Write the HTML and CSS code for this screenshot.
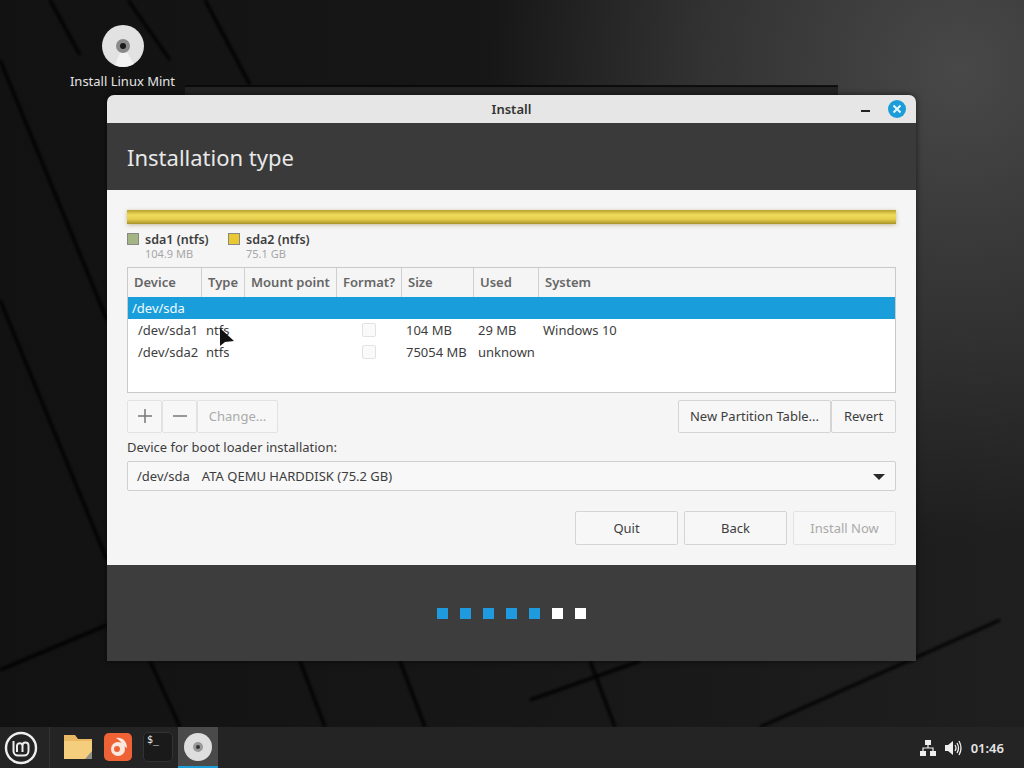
FILE: index.html
```html
<!DOCTYPE html>
<html lang="en">
<head>
    <meta charset="UTF-8">
    <meta name="viewport" content="width=device-width, initial-scale=1.0">
    <title>Install</title>
    <link rel="stylesheet" href="styles.css">
</head>
<body>
    <div class="desktop">
        <!-- wallpaper -->
        <svg class="wallpaper" viewBox="0 0 1024 768" preserveAspectRatio="none">
            <defs>
                <linearGradient id="wall" x1="0" y1="0" x2="1" y2="0">
                    <stop offset="0" stop-color="#121212"/>
                    <stop offset="0.6" stop-color="#181818"/>
                    <stop offset="1" stop-color="#1f1f1f"/>
                </linearGradient>
                <radialGradient id="glow" gradientUnits="userSpaceOnUse" cx="960" cy="70" r="470">
                    <stop offset="0" stop-color="#484848"/>
                    <stop offset="0.55" stop-color="#323232"/>
                    <stop offset="1" stop-color="#323232" stop-opacity="0"/>
                </radialGradient>
                <filter id="soft"><feGaussianBlur stdDeviation="1.500"/></filter>
            </defs>
            <rect width="1024" height="768" fill="url(#wall)"/>
            <rect width="1024" height="768" fill="url(#glow)"/>
            <g stroke="#060606" stroke-width="3" fill="none" filter="url(#soft)">
                <line x1="50" y1="0" x2="80" y2="55"/>
                <line x1="128" y1="0" x2="170" y2="60"/>
                <line x1="205" y1="0" x2="250" y2="85"/>
                <line x1="0" y1="60" x2="107" y2="320"/>
                <line x1="0" y1="300" x2="107" y2="560"/>
                <line x1="0" y1="670" x2="107" y2="625"/>
                <line x1="300" y1="661" x2="325" y2="727"/>
                <line x1="400" y1="661" x2="425" y2="727"/>
                <line x1="590" y1="661" x2="615" y2="727"/>
                <line x1="530" y1="700" x2="640" y2="661"/>
                <line x1="760" y1="727" x2="1000" y2="620"/>
                <line x1="180" y1="727" x2="150" y2="661"/>
            </g>
            <polygon points="185,86 838,86 838,95 185,95" fill="#232323"/>
            <line x1="185" y1="86" x2="838" y2="86" stroke="#050505" stroke-width="1.500"/>
        </svg>

        <div class="desktop-icon">
            <svg class="disc" viewBox="0 0 42 42" width="42" height="42">
                <circle cx="21" cy="21" r="21" fill="#e2e2e2"/>
                <path d="M21 21 L32 39 A21 21 0 0 1 13 40 Z" fill="#f2f2f2"/>
                <circle cx="21" cy="21" r="7" fill="#8a8a8a"/>
                <circle cx="21" cy="21" r="3" fill="#1a1a1a"/>
            </svg>
            <span>Install Linux Mint</span>
        </div>

        <!-- installer window -->
        <div class="window">
            <div class="titlebar">
                <span>Install</span>
                <div class="minimize"></div>
                <div class="close-btn">
                    <svg viewBox="0 0 18 18" width="18" height="18">
                        <path d="M5.500 5.500 L12.500 12.500 M12.500 5.500 L5.500 12.500" stroke="#e8f6fc" stroke-width="2" fill="none"/>
                    </svg>
                </div>
            </div>
            <div class="header"><h1>Installation type</h1></div>
            <div class="content">
                <div class="disk-bar"></div>
                <div class="legend">
                    <div class="legend-item legend-first">
                        <div class="swatch swatch-green"></div>
                        <div>
                            <div class="legend-name">sda1 (ntfs)</div>
                            <div class="legend-size">104.9 MB</div>
                        </div>
                    </div>
                    <div class="legend-item">
                        <div class="swatch swatch-yellow"></div>
                        <div>
                            <div class="legend-name">sda2 (ntfs)</div>
                            <div class="legend-size">75.1 GB</div>
                        </div>
                    </div>
                </div>

                <div class="table">
                    <div class="row table-head">
                        <div class="col col-device">Device</div>
                        <div class="col col-type">Type</div>
                        <div class="col col-mount">Mount point</div>
                        <div class="col col-format">Format?</div>
                        <div class="col col-size">Size</div>
                        <div class="col col-used">Used</div>
                        <div class="col col-system">System</div>
                    </div>
                    <div class="row row-selected"><div class="cell-root">/dev/sda</div></div>
                    <div class="row">
                        <div class="col col-device cell-dev">/dev/sda1</div>
                        <div class="col col-type">ntfs</div>
                        <div class="col col-mount"></div>
                        <div class="col col-format"><div class="check"></div></div>
                        <div class="col col-size">104 MB</div>
                        <div class="col col-used">29 MB</div>
                        <div class="col col-system">Windows 10</div>
                    </div>
                    <div class="row">
                        <div class="col col-device cell-dev">/dev/sda2</div>
                        <div class="col col-type">ntfs</div>
                        <div class="col col-mount"></div>
                        <div class="col col-format"><div class="check"></div></div>
                        <div class="col col-size">75054 MB</div>
                        <div class="col col-used">unknown</div>
                        <div class="col col-system"></div>
                    </div>
                </div>

                <div class="table-tools">
                    <div class="tool-group">
                        <div class="btn btn-icon">
                            <svg viewBox="0 0 16 16" width="16" height="16"><path d="M8 1 V15 M1 8 H15" stroke="#777" stroke-width="1.500" fill="none"/></svg>
                        </div>
                        <div class="btn btn-icon">
                            <svg viewBox="0 0 16 16" width="16" height="16"><path d="M1 8 H15" stroke="#777" stroke-width="1.500" fill="none"/></svg>
                        </div>
                        <div class="btn btn-change">Change...</div>
                    </div>
                    <div class="tool-group">
                        <div class="btn btn-table">New Partition Table...</div>
                        <div class="btn btn-revert">Revert</div>
                    </div>
                </div>

                <div class="boot-label">Device for boot loader installation:</div>
                <div class="combo">
                    <span class="combo-dev">/dev/sda</span>
                    <span>ATA QEMU HARDDISK (75.2 GB)</span>
                    <div class="combo-arrow"></div>
                </div>

                <div class="actions">
                    <div class="btn btn-action">Quit</div>
                    <div class="btn btn-action">Back</div>
                    <div class="btn btn-action btn-disabled">Install Now</div>
                </div>
            </div>
            <div class="footer">
                <div class="dot dot-on"></div>
                <div class="dot dot-on"></div>
                <div class="dot dot-on"></div>
                <div class="dot dot-on"></div>
                <div class="dot dot-on"></div>
                <div class="dot"></div>
                <div class="dot"></div>
            </div>
        </div>

        <!-- mouse pointer -->
        <svg class="pointer" viewBox="0 0 16 22" width="16" height="22">
            <path d="M1 1 L1 19 L6 15 L15 14 Z" fill="#111"/>
        </svg>

        <!-- taskbar -->
        <div class="taskbar">
            <div class="menu-btn">
                <svg viewBox="0 0 34 34" width="34" height="34">
                    <circle cx="17" cy="17" r="15" fill="none" stroke="#eee" stroke-width="2.400"/>
                    <path d="M9.500 10 V20 A4.500 4.500 0 0 0 14 24.500 H20 A4.500 4.500 0 0 0 24.500 20 V14.500 A3 3 0 0 0 18.500 14.500 V21 M18.500 14.500 A2.800 2.800 0 0 0 13 14.500 V21" fill="none" stroke="#eee" stroke-width="2"/>
                </svg>
            </div>
            <div class="launcher">
                <svg viewBox="0 0 30 28" width="30" height="28">
                    <path d="M1 2 H12 L15 6 H29 V26 H1 Z" fill="#e8b962"/>
                    <path d="M1 8 H29 V26 H1 Z" fill="#f4cd7d"/>
                    <path d="M22 26 L29 18 V26 Z" fill="#8f8f85"/>
                </svg>
            </div>
            <div class="launcher">
                <svg viewBox="0 0 28 28" width="28" height="28">
                    <rect width="28" height="28" rx="5" fill="#ef6236"/>
                    <circle cx="14" cy="16" r="7" fill="#fbe9df"/>
                    <circle cx="13" cy="16" r="3" fill="#ef6236"/>
                    <path d="M12 5 C18 4 23 8 23 15 L18 12 C18 9 15 7 12 5 Z" fill="#fbe9df"/>
                </svg>
            </div>
            <div class="launcher">
                <div class="terminal">$_</div>
            </div>
            <div class="launcher launcher-active">
                <svg viewBox="0 0 28 28" width="28" height="28">
                    <circle cx="14" cy="14" r="14" fill="#dedede"/>
                    <circle cx="14" cy="14" r="5" fill="#999"/>
                    <circle cx="14" cy="14" r="2" fill="#333"/>
                </svg>
            </div>
            <div class="tray">
                <svg viewBox="0 0 18 18" width="18" height="18">
                    <path d="M6 1 H12 V6 H6 Z M1 12 H7 V17 H1 Z M11 12 H17 V17 H11 Z" fill="#eee"/>
                    <path d="M9 6 V9 M4 12 V9 H14 V12" fill="none" stroke="#eee" stroke-width="1.200"/>
                </svg>
                <svg viewBox="0 0 18 18" width="18" height="18">
                    <path d="M1 6 H4 L9 2 V16 L4 12 H1 Z" fill="#eee"/>
                    <path d="M11 6 Q13 9 11 12 M13 4 Q16 9 13 14 M15 2 Q19 9 15 16" fill="none" stroke="#eee" stroke-width="1.300"/>
                </svg>
                <span class="clock">01:46</span>
            </div>
        </div>
    </div>
</body>
</html>
```

FILE: styles.css
```css
* {
    box-sizing: border-box;
}

body {
    font-family: "Noto Sans", "Open Sans", sans-serif;
    font-size: 13px;
    margin: 0;
    padding: 0;
    color: #3d3d3d;
}

.desktop {
    position: relative;
    width: 1024px;
    height: 768px;
    overflow: hidden;
    display: flex;
    flex-direction: column;
    justify-content: flex-end;
    background-color: #161616;
}

.wallpaper {
    position: absolute;
    top: 0;
    left: 0;
    width: 100%;
    height: 100%;
}

.desktop-icon {
    position: absolute;
    top: 25px;
    left: 60px;
    width: 125px;
    display: flex;
    flex-direction: column;
    align-items: center;
    gap: 5px;
    color: #e4e4e4;
}

.window {
    position: absolute;
    top: 95px;
    left: 107px;
    width: 809px;
    height: 566px;
    display: flex;
    flex-direction: column;
    border-radius: 7px 7px 0 0;
    overflow: hidden;
    box-shadow: 0 0 6px rgba(0, 0, 0, 0.6);
}

.titlebar {
    position: relative;
    height: 28px;
    flex: none;
    display: flex;
    justify-content: center;
    align-items: center;
    background-color: #e6e6e6;
    font-weight: 600;
    color: #333;
}

.minimize {
    position: absolute;
    top: 15px;
    right: 46px;
    width: 9px;
    height: 2px;
    background-color: #222;
}

.close-btn {
    position: absolute;
    top: 5px;
    right: 10px;
    width: 18px;
    height: 18px;
    border-radius: 50%;
    background-color: #1b9dd9;
}

.close-btn svg {
    display: block;
}

.header {
    height: 67px;
    flex: none;
    display: flex;
    align-items: center;
    padding-left: 20px;
    background-color: #3a3a3a;
}

.header h1 {
    margin: 0;
    font-size: 22px;
    font-weight: 400;
    color: #e8e8e8;
}

.content {
    height: 375px;
    flex: none;
    padding: 20px 20px 0;
    background-color: #f5f5f5;
}

.disk-bar {
    height: 14px;
    background:
        repeating-linear-gradient(90deg, transparent 0, transparent 40px, rgba(110, 95, 20, 0.45) 40px, rgba(110, 95, 20, 0.45) 41px),
        linear-gradient(#b8a02e, #efdb5b 35%, #e6cf4c 65%, #a8922a);
    background-size: 40px 100%, 100% 100%;
    box-shadow: 0 1px 4px rgba(120, 100, 20, 0.4);
}

.legend {
    display: flex;
    gap: 16px;
    margin-top: 9px;
    height: 34px;
}

.legend-item {
    display: flex;
    gap: 6px;
}

.legend-first {
    width: 85px;
}

.swatch {
    width: 12px;
    height: 12px;
    margin-top: 0;
    border: 1px solid #888;
}

.swatch-green {
    background-color: #a3b583;
}

.swatch-yellow {
    background-color: #e9c832;
}

.legend-name {
    font-size: 12.500px;
    font-weight: 600;
    line-height: 13px;
    color: #3d3d3d;
}

.legend-size {
    font-size: 11px;
    line-height: 16px;
    color: #a6a6a6;
}

.table {
    height: 126px;
    background-color: #fff;
    border: 1px solid #c9c9c9;
}

.row {
    display: flex;
    height: 22px;
    line-height: 22px;
}

.table-head {
    height: 29px;
    line-height: 28px;
    background-color: #f5f5f5;
    font-weight: 600;
    color: #666;
}

.table-head .col {
    padding-left: 6px;
    border-right: 1px solid #cfcfcf;
}

.table-head .col-system {
    border-right: none;
}

.row-selected {
    background-color: #1a9edb;
    color: #f2fbff;
}

.cell-root {
    padding-left: 4px;
}

.col {
    flex: none;
    white-space: nowrap;
    padding-left: 4px;
}

.col-device {
    width: 74px;
}

.cell-dev {
    padding-left: 10px;
}

.col-type {
    width: 43px;
}

.col-mount {
    width: 92px;
}

.col-format {
    width: 65px;
}

.col-size {
    width: 72px;
}

.col-used {
    width: 65px;
}

.col-system {
    flex: 1;
}

.check {
    width: 14px;
    height: 14px;
    margin: 4px 0 0 21px;
    border: 1px solid #e2e2e2;
    border-radius: 2px;
    background-color: #fafafa;
}

.table-tools {
    display: flex;
    justify-content: space-between;
    margin-top: 7px;
    line-height: 16px;
}

.tool-group {
    display: flex;
}

.btn {
    height: 33px;
    padding-bottom: 2px;
    display: flex;
    justify-content: center;
    align-items: center;
    background-color: #f7f7f7;
    border: 1px solid #d4d4d4;
    border-radius: 2px;
    color: #3d3d3d;
}

.btn-icon {
    width: 35px;
    border-color: #e2e2e2;
}

.btn-change {
    width: 81px;
    border-color: #e2e2e2;
    color: #aaa;
}

.btn-table {
    width: 153px;
}

.btn-revert {
    width: 65px;
}

.boot-label {
    margin-top: 6px;
    line-height: 16px;
    color: #3d3d3d;
}

.combo {
    position: relative;
    height: 30px;
    margin-top: 6px;
    display: flex;
    align-items: center;
    gap: 12px;
    padding-left: 9px;
    background-color: #f8f8f8;
    border: 1px solid #cfcfcf;
    border-radius: 2px;
}

.combo-arrow {
    position: absolute;
    top: 12px;
    right: 10px;
    width: 0;
    height: 0;
    border-style: solid;
    border-width: 6px 6px 0 6px;
    border-color: #2a2a2a transparent transparent transparent;
}

.actions {
    display: flex;
    justify-content: flex-end;
    gap: 6px;
    margin-top: 20px;
}

.btn-action {
    width: 103px;
    height: 34px;
    padding-bottom: 0;
}

.btn-disabled {
    border-color: #e2e2e2;
    color: #aaa;
}

.footer {
    flex: 1;
    display: flex;
    justify-content: center;
    align-items: center;
    gap: 12px;
    background-color: #3d3d3d;
}

.dot {
    width: 11px;
    height: 11px;
    background-color: #fff;
}

.dot-on {
    background-color: #1f9ade;
}

.pointer {
    position: absolute;
    top: 327px;
    left: 219px;
}

.taskbar {
    position: relative;
    height: 41px;
    flex: none;
    display: flex;
    align-items: center;
    background-color: #242424;
}

.menu-btn {
    width: 50px;
    height: 100%;
    padding-left: 4px;
    display: flex;
    align-items: center;
    border-right: 1px solid #333;
}

.launcher {
    width: 40px;
    height: 100%;
    display: flex;
    justify-content: center;
    align-items: center;
    border-bottom: 2px solid transparent;
}

.launcher:nth-child(2) {
    margin-left: 8px;
}

.launcher-active {
    background-color: #4a4a4a;
    border-bottom-color: #1b9dd9;
}

.terminal {
    width: 30px;
    height: 30px;
    padding: 1px 3px;
    font-family: "DejaVu Sans Mono", monospace;
    font-size: 10px;
    line-height: 12px;
    color: #eee;
    background-color: #1a1a1a;
    border: 1px solid #333;
    border-radius: 5px;
}

.tray {
    margin-left: auto;
    padding-right: 20px;
    display: flex;
    align-items: center;
    gap: 7px;
}

.clock {
    margin-left: 2px;
    font-weight: 600;
    color: #e6e6e6;
}
```
